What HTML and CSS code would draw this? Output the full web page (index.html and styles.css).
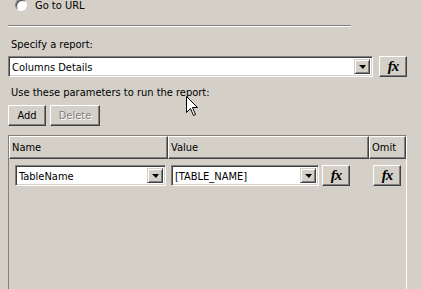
FILE: index.html
```html
<!DOCTYPE html>
<html lang="en">
  <head>
    <meta charset="UTF-8" />
    <title>Report action</title>
    <link rel="stylesheet" href="styles.css">
  </head>
  <body>
    <div class="radio-row">
      <span class="radio"></span>
      <span>Go to URL</span>
    </div>
    <div class="sep"></div>

    <div class="label first">Specify a report:</div>
    <div class="combo-row">
      <div class="combo wide">
        <span class="combo-text">Columns Details</span>
        <span class="drop"><span class="arrow"></span></span>
      </div>
      <button class="btn fx"><i>fx</i></button>
    </div>

    <div class="label second">Use these parameters to run the report:</div>
    <div class="btn-row">
      <button class="btn add">Add</button>
      <button class="btn del" disabled>Delete</button>
    </div>

    <div class="grid">
      <div class="grid-head">
        <div class="hcell">Name</div>
        <div class="hcell">Value</div>
        <div class="hcell">Omit</div>
      </div>
      <div class="grid-row">
        <div class="cell name-cell">
          <div class="combo name-combo">
            <span class="combo-text">TableName</span>
            <span class="drop"><span class="arrow"></span></span>
          </div>
        </div>
        <div class="cell value-cell">
          <div class="combo value-combo">
            <span class="combo-text">[TABLE_NAME]</span>
            <span class="drop"><span class="arrow"></span></span>
          </div>
          <button class="btn fx small"><i>fx</i></button>
        </div>
        <div class="cell omit-cell">
          <button class="btn fx small"><i>fx</i></button>
        </div>
      </div>
    </div>

    <svg class="cursor" width="13" height="21" viewBox="0 0 13 21">
      <path d="M0.5 0.5 L0.5 16.5 L4.5 12.5 L7.5 19.5 L9.5 18.5 L6.5 11.5 L11.5 11.5 Z" fill="#fff" stroke="#000" stroke-width="1"/>
    </svg>
  </body>
</html>
```

FILE: styles.css
```css
body {
  margin: 0;
  background: #d4d0c8;
  font-family: "DejaVu Sans Condensed", "DejaVu Sans", sans-serif;
  font-stretch: condensed;
  font-size: 11px;
  color: #000;
  position: relative;
  height: 289px;
  overflow: hidden;
}
.radio-row {
  display: flex;
  align-items: center;
  gap: 8px;
  margin-top: -2px;
  padding-left: 15px;
  height: 14px;
}
.radio {
  width: 10px;
  height: 10px;
  border-radius: 50%;
  background: #fff;
  border: 1px solid #808080;
  border-right-color: #fff;
  border-bottom-color: #fff;
  box-shadow: inset 1px 1px #404040;
}
.sep {
  margin: 13px 0 0 8px;
  width: 343px;
  border-top: 1px solid #808080;
  border-bottom: 1px solid #fff;
}
.label {
  padding-left: 11px;
  height: 13px;
  line-height: 13px;
}
.label.first {
  margin-top: 11px;
}
.label.second {
  margin-top: 9px;
}
.combo-row {
  display: flex;
  gap: 6px;
  margin: 5px 0 0 8px;
}
.combo {
  display: flex;
  align-items: stretch;
  height: 21px;
  box-sizing: border-box;
  background: #fff;
  border: 1px solid;
  border-color: #808080 #fff #fff #808080;
  box-shadow: inset 1px 1px #404040, inset -1px -1px #d4d0c8;
  padding: 2px;
}
.combo.wide {
  width: 365px;
}
.combo-text {
  flex: 1;
  line-height: 17px;
  padding-left: 1px;
  white-space: nowrap;
  overflow: hidden;
}
.drop {
  width: 16px;
  box-sizing: border-box;
  background: #d4d0c8;
  border: 1px solid;
  border-color: #d4d0c8 #404040 #404040 #d4d0c8;
  box-shadow: inset 1px 1px #fff, inset -1px -1px #808080;
  display: flex;
  align-items: center;
  justify-content: center;
}
.arrow {
  width: 0;
  height: 0;
  border-left: 4px solid transparent;
  border-right: 3px solid transparent;
  border-top: 4px solid #000;
  margin-top: 1px;
}
.btn {
  box-sizing: border-box;
  height: 21px;
  background: #d4d0c8;
  border: 1px solid;
  border-color: #fff #404040 #404040 #fff;
  box-shadow: inset -1px -1px #808080;
  font-family: inherit;
  font-stretch: inherit;
  font-size: 11px;
  color: #000;
  padding: 0;
}
.fx {
  width: 28px;
}
.fx i {
  font-family: "Liberation Serif", serif;
  font-stretch: normal;
  font-weight: bold;
  font-size: 15px;
  letter-spacing: -1px;
}
.btn-row {
  display: flex;
  gap: 4px;
  margin: 6px 0 0 8px;
}
.add {
  width: 38px;
}
.del {
  width: 50px;
  color: #808080;
  text-shadow: 1px 1px #fff;
}
.grid {
  margin: 9px 0 0 8px;
  width: 399px;
  height: 155px;
  box-sizing: border-box;
  border: 1px solid;
  border-color: #808080 #fff #fff #808080;
}
.grid-head,
.grid-row {
  display: grid;
  grid-template-columns: 159px 201px 37px;
}
.hcell {
  height: 23px;
  box-sizing: border-box;
  border: 1px solid;
  border-color: #fff #404040 #404040 #fff;
  box-shadow: inset -1px -1px #808080;
  padding-left: 2px;
  line-height: 21px;
}
.grid-row {
  margin-top: 6px;
}
.cell {
  display: flex;
  gap: 3px;
}
.name-cell {
  padding-left: 6px;
}
.name-combo {
  width: 151px;
}
.value-cell {
  padding-left: 3px;
}
.value-combo {
  width: 148px;
}
.omit-cell {
  padding-left: 4px;
}
.cursor {
  position: absolute;
  left: 186px;
  top: 96px;
}
```
